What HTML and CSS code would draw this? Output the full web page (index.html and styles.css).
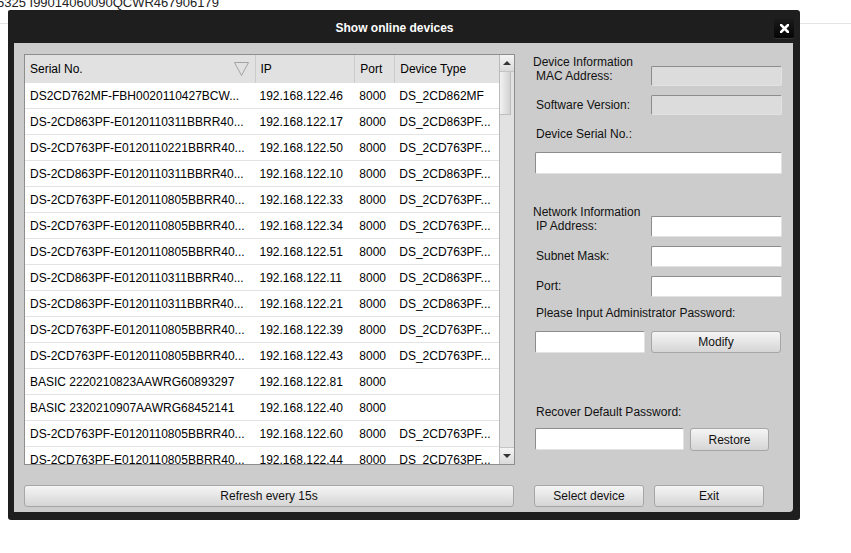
FILE: index.html
```html
<!DOCTYPE html>
<html lang="en">
<head>
    <meta charset="UTF-8">
    <title>Show online devices</title>
    <link rel="stylesheet" href="styles.css">
</head>
<body>

<div class="page-head"><span>6325 I99014060090QCWR467906179</span></div>

<!-- Online devices dialog -->
<div class="dialog">
    <div class="dialog-title">
        <h3>Show online devices</h3>
        <div class="close-btn">
            <svg width="9" height="9" viewBox="0 0 9 9"><path d="M1 1 L8 8 M8 1 L1 8" stroke="#fff" stroke-width="2.6" stroke-linecap="square"/></svg>
        </div>
    </div>

    <div class="dialog-body">
        <div class="left-pane">
            <div class="list-box">
                <div class="grid">
                    <div class="grid-head">
                        <div class="col-serial head-serial">Serial No.
                            <svg width="15" height="14" viewBox="0 0 15 14"><path d="M0.5 0.5 L14.5 0.5 L7.5 13.5 Z" fill="none" stroke="#a3a3a3" stroke-width="1"/></svg>
                        </div>
                        <div class="col-ip">IP</div>
                        <div class="col-port">Port</div>
                        <div class="col-type">Device Type</div>
                    </div>
                    <div class="grid-row"><div class="col-serial">DS2CD762MF-FBH0020110427BCW...</div><div class="col-ip">192.168.122.46</div><div class="col-port">8000</div><div class="col-type">DS_2CD862MF</div></div>
                    <div class="grid-row"><div class="col-serial">DS-2CD863PF-E0120110311BBRR40...</div><div class="col-ip">192.168.122.17</div><div class="col-port">8000</div><div class="col-type">DS_2CD863PF...</div></div>
                    <div class="grid-row"><div class="col-serial">DS-2CD763PF-E0120110221BBRR40...</div><div class="col-ip">192.168.122.50</div><div class="col-port">8000</div><div class="col-type">DS_2CD763PF...</div></div>
                    <div class="grid-row"><div class="col-serial">DS-2CD863PF-E0120110311BBRR40...</div><div class="col-ip">192.168.122.10</div><div class="col-port">8000</div><div class="col-type">DS_2CD863PF...</div></div>
                    <div class="grid-row"><div class="col-serial">DS-2CD763PF-E0120110805BBRR40...</div><div class="col-ip">192.168.122.33</div><div class="col-port">8000</div><div class="col-type">DS_2CD763PF...</div></div>
                    <div class="grid-row"><div class="col-serial">DS-2CD763PF-E0120110805BBRR40...</div><div class="col-ip">192.168.122.34</div><div class="col-port">8000</div><div class="col-type">DS_2CD763PF...</div></div>
                    <div class="grid-row"><div class="col-serial">DS-2CD763PF-E0120110805BBRR40...</div><div class="col-ip">192.168.122.51</div><div class="col-port">8000</div><div class="col-type">DS_2CD763PF...</div></div>
                    <div class="grid-row"><div class="col-serial">DS-2CD863PF-E0120110311BBRR40...</div><div class="col-ip">192.168.122.11</div><div class="col-port">8000</div><div class="col-type">DS_2CD863PF...</div></div>
                    <div class="grid-row"><div class="col-serial">DS-2CD863PF-E0120110311BBRR40...</div><div class="col-ip">192.168.122.21</div><div class="col-port">8000</div><div class="col-type">DS_2CD863PF...</div></div>
                    <div class="grid-row"><div class="col-serial">DS-2CD763PF-E0120110805BBRR40...</div><div class="col-ip">192.168.122.39</div><div class="col-port">8000</div><div class="col-type">DS_2CD763PF...</div></div>
                    <div class="grid-row"><div class="col-serial">DS-2CD763PF-E0120110805BBRR40...</div><div class="col-ip">192.168.122.43</div><div class="col-port">8000</div><div class="col-type">DS_2CD763PF...</div></div>
                    <div class="grid-row"><div class="col-serial">BASIC 2220210823AAWRG60893297</div><div class="col-ip">192.168.122.81</div><div class="col-port">8000</div><div class="col-type"></div></div>
                    <div class="grid-row"><div class="col-serial">BASIC 2320210907AAWRG68452141</div><div class="col-ip">192.168.122.40</div><div class="col-port">8000</div><div class="col-type"></div></div>
                    <div class="grid-row"><div class="col-serial">DS-2CD763PF-E0120110805BBRR40...</div><div class="col-ip">192.168.122.60</div><div class="col-port">8000</div><div class="col-type">DS_2CD763PF...</div></div>
                    <div class="grid-row"><div class="col-serial">DS-2CD763PF-E0120110805BBRR40...</div><div class="col-ip">192.168.122.44</div><div class="col-port">8000</div><div class="col-type">DS_2CD763PF...</div></div>
                </div>
                <div class="scrollbar">
                    <div class="sb-btn"><span class="arrow-up"></span></div>
                    <div class="sb-thumb"></div>
                    <div class="sb-btn sb-bottom"><span class="arrow-down"></span></div>
                </div>
            </div>
            <button class="btn btn-refresh">Refresh every 15s</button>
        </div>

        <div class="right-pane">
            <div class="form-row row-group">
                <div class="label-stack">
                    <div class="group-title">Device Information</div>
                    <div class="label">MAC Address:</div>
                </div>
                <div class="field disabled"></div>
            </div>
            <div class="form-row row-soft">
                <div class="label">Software Version:</div>
                <div class="field disabled"></div>
            </div>
            <div class="label line row-serial-label">Device Serial No.:</div>
            <div class="field field-wide row-serial"></div>

            <div class="form-row row-group row-net">
                <div class="label-stack">
                    <div class="group-title">Network Information</div>
                    <div class="label">IP Address:</div>
                </div>
                <div class="field"></div>
            </div>
            <div class="form-row row-soft">
                <div class="label">Subnet Mask:</div>
                <div class="field"></div>
            </div>
            <div class="form-row row-soft">
                <div class="label">Port:</div>
                <div class="field"></div>
            </div>
            <div class="label line row-pass-label">Please Input Administrator Password:</div>
            <div class="action-row row-modify">
                <div class="field field-pass"></div>
                <button class="btn btn-modify">Modify</button>
            </div>

            <div class="label line row-recover-label">Recover Default Password:</div>
            <div class="action-row row-restore">
                <div class="field field-recover"></div>
                <button class="btn btn-restore">Restore</button>
            </div>

            <div class="action-row row-bottom">
                <button class="btn btn-select">Select device</button>
                <button class="btn btn-exit">Exit</button>
            </div>
        </div>
    </div>
</div>

</body>
</html>
```

FILE: styles.css
```css
body {
    margin: 0;
    background: #fff;
    font-family: "Liberation Sans", Arial, sans-serif;
    font-size: 12px;
    color: #000;
}
.page-head {
    height: 23px;
    border-bottom: 1px solid #e4e4e4;
    overflow: hidden;
}
.page-head span {
    display: block;
    margin-top: -4px;
    margin-left: -3px;
    font-size: 13px;
    line-height: 14px;
    color: #222;
}

/* dialog frame */
.dialog {
    position: absolute;
    left: 8px;
    top: 10px;
    width: 792px;
    height: 510px;
    background: #1e1e1e;
    border-radius: 2px 3px 3px 3px;
    display: flex;
    flex-direction: column;
}
.dialog-title {
    height: 33px;
    display: flex;
    padding-left: 7px;
    padding-right: 6px;
}
.dialog-title h3 {
    flex: 1;
    margin: 0;
    line-height: 37px;
    text-align: center;
    color: #fff;
    font-size: 12px;
    font-weight: bold;
}
.close-btn {
    width: 20px;
    height: 19px;
    margin-top: 9px;
    background: linear-gradient(#1a1a1a, #050505);
    border-radius: 2px;
    box-shadow: 0 1px 0 #333;
    display: flex;
    align-items: center;
    justify-content: center;
}
.dialog-body {
    flex: 1;
    margin: 0 7px 8px 6px;
    background: #cccccc;
    border-radius: 0 0 4px 0;
    display: flex;
}

/* device list */
.left-pane {
    padding: 11px 0 0 10px;
    display: flex;
    flex-direction: column;
}
.list-box {
    width: 491px;
    height: 411px;
    box-sizing: border-box;
    border: 1px solid #8e8e8e;
    background: #fff;
    display: flex;
    overflow: hidden;
}
.grid {
    width: 475px;
    overflow: hidden;
}
.grid-head, .grid-row {
    display: flex;
    white-space: nowrap;
}
.grid-head {
    height: 28px;
    line-height: 28px;
    background: #e1e1e1;
}
.grid-head .col-ip, .grid-head .col-port, .grid-head .col-type {
    border-left: 1px solid #cbcbcb;
}
.grid-row {
    height: 26px;
    line-height: 26px;
    box-sizing: border-box;
    border-bottom: 1px solid #e3e3e3;
}
.col-serial, .col-ip, .col-port, .col-type {
    box-sizing: border-box;
    overflow: hidden;
    padding-left: 5px;
}
.col-serial { width: 230px; }
.col-ip { width: 100px; }
.col-port { width: 40px; }
.col-type { width: 105px; }
.head-serial {
    display: flex;
    justify-content: space-between;
    align-items: center;
    padding-right: 6px;
}
.scrollbar {
    width: 14px;
    background: #e2e2e2;
    border-left: 1px solid #b9b9b9;
    display: flex;
    flex-direction: column;
}
.sb-btn {
    height: 16px;
    background: linear-gradient(#f4f4f4, #dadada);
    border-bottom: 1px solid #c4c4c4;
    display: flex;
    align-items: center;
    justify-content: center;
}
.sb-bottom {
    margin-top: auto;
    border-bottom: none;
    border-top: 1px solid #c4c4c4;
}
.arrow-up {
    border-left: 4px solid transparent;
    border-right: 4px solid transparent;
    border-bottom: 4px solid #333;
}
.arrow-down {
    border-left: 4px solid transparent;
    border-right: 4px solid transparent;
    border-top: 4px solid #333;
}
.sb-thumb {
    height: 43px;
    width: 11px;
    background: linear-gradient(90deg, #f2f2f2, #d2d2d2);
    border-right: 1px solid #bdbdbd;
    border-bottom: 1px solid #bdbdbd;
    box-sizing: border-box;
}

/* buttons and fields */
.btn {
    font-family: "Liberation Sans", Arial, sans-serif;
    font-size: 12px;
    color: #111;
    height: 22px;
    padding: 0;
    background: linear-gradient(#f5f5f5, #d5d5d5);
    border: 1px solid #a6a6a6;
    border-radius: 3px;
}
.btn-refresh {
    width: 490px;
    margin-top: 20px;
}
.field {
    width: 131px;
    height: 21px;
    box-sizing: border-box;
    background: #fff;
    border: 1px solid;
    border-color: #8c8c8c #e2e2e2 #e2e2e2 #8c8c8c;
    border-radius: 2px;
}
.field.disabled {
    height: 20px;
    background: #dcdcdc;
}

/* right form */
.right-pane {
    padding: 11px 0 0 0;
    margin-left: 20px;
    width: 247px;
    display: flex;
    flex-direction: column;
}
.form-row {
    display: flex;
    justify-content: space-between;
}
.label {
    padding-left: 1px;
    color: #111;
}
.form-row > .label {
    line-height: 21px;
}
.label-stack {
    padding-top: 1px;
    line-height: 14px;
}
.group-title {
    margin-left: -2px;
    color: #111;
}
.row-group {
    height: 32px;
    align-items: flex-start;
}
.row-group .field {
    align-self: flex-end;
}
.row-net {
    height: 33px;
    margin-top: 30px;
}
.row-soft {
    margin-top: 9px;
}
.line {
    line-height: 14px;
}
.row-serial-label {
    margin-top: 11px;
}
.field-wide {
    width: 247px;
    height: 22px;
}
.row-serial {
    margin-top: 11px;
}
.row-pass-label {
    margin-top: 9px;
}
.action-row {
    display: flex;
}
.row-modify {
    margin-top: 11px;
}
.field-pass {
    width: 110px;
    height: 22px;
}
.btn-modify {
    width: 130px;
    margin-left: 6px;
}
.row-recover-label {
    margin-top: 52px;
}
.row-restore {
    margin-top: 9px;
}
.field-recover {
    width: 149px;
    height: 22px;
}
.btn-restore {
    width: 79px;
    height: 23px;
    margin-left: 6px;
}
.row-bottom {
    margin-top: 34px;
    margin-left: -1px;
}
.btn-select, .btn-exit {
    width: 110px;
}
.btn-exit {
    margin-left: 10px;
}
```
